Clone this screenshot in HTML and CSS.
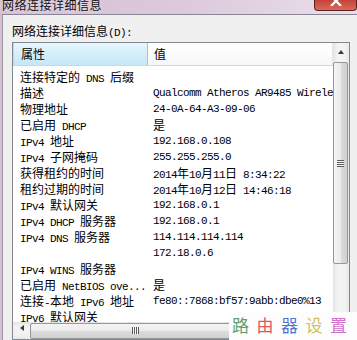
FILE: index.html
```html
<!DOCTYPE html>
<html lang="zh-CN">
<head>
  <meta charset="UTF-8" />
  <title>网络连接详细信息</title>
  <link rel="stylesheet" href="styles.css">
</head>
<body>
  <div class="window">
    <div class="titlebar">
      <span class="title">网络连接详细信息</span>
      <span class="close">
        <svg width="12" height="6" viewBox="0 0 12 6"><path d="M1 -4 L11 6 M11 -4 L1 6" stroke="#fff" stroke-width="2.4"/></svg>
      </span>
    </div>
    <div class="client">
      <div class="label">网络连接详细信息<span class="en">(D):</span></div>
      <div class="list">
        <div class="view">
          <div class="header">
            <div class="hcell hot">属性</div>
            <div class="hcell">值</div>
          </div>
          <div class="rows">
            <div class="row"><div class="k">连接特定的<span class="en"> DNS </span>后缀</div><div class="v"></div></div>
            <div class="row"><div class="k">描述</div><div class="v en">Qualcomm Atheros AR9485 Wireless Network Adapter</div></div>
            <div class="row"><div class="k">物理地址</div><div class="v en">24-0A-64-A3-09-06</div></div>
            <div class="row"><div class="k">已启用<span class="en"> DHCP</span></div><div class="v">是</div></div>
            <div class="row"><div class="k"><span class="en">IPv4 </span>地址</div><div class="v en">192.168.0.108</div></div>
            <div class="row"><div class="k"><span class="en">IPv4 </span>子网掩码</div><div class="v en">255.255.255.0</div></div>
            <div class="row"><div class="k">获得租约的时间</div><div class="v"><span class="en">2014</span>年<span class="en">10</span>月<span class="en">11</span>日<span class="en"> 8:34:22</span></div></div>
            <div class="row"><div class="k">租约过期的时间</div><div class="v"><span class="en">2014</span>年<span class="en">10</span>月<span class="en">12</span>日<span class="en"> 14:46:18</span></div></div>
            <div class="row"><div class="k"><span class="en">IPv4 </span>默认网关</div><div class="v en">192.168.0.1</div></div>
            <div class="row"><div class="k"><span class="en">IPv4 DHCP </span>服务器</div><div class="v en">192.168.0.1</div></div>
            <div class="row"><div class="k"><span class="en">IPv4 DNS </span>服务器</div><div class="v en">114.114.114.114</div></div>
            <div class="row"><div class="k"></div><div class="v en">172.18.0.6</div></div>
            <div class="row"><div class="k"><span class="en">IPv4 WINS </span>服务器</div><div class="v"></div></div>
            <div class="row"><div class="k">已启用<span class="en"> NetBIOS ove...</span></div><div class="v">是</div></div>
            <div class="row"><div class="k">连接<span class="en">-</span>本地<span class="en"> IPv6 </span>地址</div><div class="v en">fe80::7868:bf57:9abb:dbe0%13</div></div>
            <div class="row"><div class="k"><span class="en">IPv6 </span>默认网关</div><div class="v"></div></div>
          </div>
        </div>
        <div class="vscroll">
          <div class="arrow up"></div>
          <div class="vthumb"><span class="grip"></span></div>
        </div>
        <div class="hscroll">
          <div class="arrow left"></div>
          <div class="hthumb"><span class="grip"></span></div>
        </div>
        <div class="corner"></div>
      </div>
    </div>
    <!-- 水印 -->
    <div class="watermark">
      <span class="c1">路</span><span class="c2">由</span><span class="c3">器</span><span class="c4">设</span><span class="c5">置</span>
    </div>
  </div>
</body>
</html>
```

FILE: styles.css
```css
body {
    margin: 0;
    font-family: "Noto Sans CJK SC", sans-serif;
    font-size: 12px;
    color: #000;
    background: #f0f0f0;
}
.window {
    position: relative;
    width: 357px;
    height: 340px;
    overflow: hidden;
    display: flex;
    flex-direction: column;
    background: linear-gradient(to right, #d5c0d3, #dcc9da 50%, #e8dfe8);
}
.titlebar {
    height: 19px;
    display: flex;
    align-items: flex-start;
    padding-left: 2px;
}
.title {
    font-size: 12px;
    letter-spacing: 0.5px;
    line-height: 12px;
    margin-top: -1px;
    color: #111;
    text-shadow: 0 0 4px #f4eef4;
}
.close {
    margin-left: auto;
    width: 41px;
    height: 10px;
    border: 1px solid #5b2020;
    border-top: none;
    border-radius: 0 0 4px 4px;
    background: linear-gradient(#c4433a, #d86a58);
    display: flex;
    justify-content: center;
    align-items: flex-start;
}
.client {
    flex: 1;
    margin-left: 2px;
    border-top: 1px solid #8a8594;
    border-left: 1px solid #9a96a0;
    background: #f0f0f0;
    padding-left: 9px;
}
.label {
    padding-top: 8px;
    line-height: 16px;
    height: 16px;
}
.en {
    font-family: "Liberation Mono", monospace;
    font-size: 11px;
    letter-spacing: -0.6px;
}
.label {
    margin-bottom: 3px;
}
.list {
    width: 338px;
    box-sizing: border-box;
    border: 1px solid #828790;
    background: #fff;
    display: grid;
    grid-template-columns: 320px 16px;
    grid-template-rows: 279px 17px;
}
.view {
    overflow: hidden;
}
.header {
    display: grid;
    grid-template-columns: 135px 1fr;
    height: 22px;
    border-bottom: 1px solid #d5d5d5;
}
.hcell {
    padding-left: 6px;
    line-height: 22px;
    background: linear-gradient(#ffffff, #f6f7f9);
    border-right: 1px solid #e3e5e8;
}
.hcell.hot {
    padding-left: 7px;
    background: linear-gradient(#e6f6fd, #c5e7f8);
    border-left: 1px solid #b7dcef;
    border-right: 1px solid #93c9e3;
    box-sizing: border-box;
}
.rows {
    padding-top: 3px;
}
.row {
    display: grid;
    grid-template-columns: 135px 1fr;
    height: 16px;
    line-height: 16px;
    white-space: nowrap;
}
.k {
    padding-left: 7px;
    overflow: hidden;
}
.v {
    padding-left: 5px;
    overflow: hidden;
}
.vscroll {
    display: flex;
    flex-direction: column;
    background: linear-gradient(to right, #e4e4e4, #f3f3f3 30%, #f3f3f3 70%, #e8e8e8);
}
.arrow {
    display: flex;
    justify-content: center;
    align-items: center;
}
.arrow.up {
    height: 18px;
}
.arrow.up::before {
    content: "";
    border: 3.5px solid transparent;
    border-bottom: 4px solid #3a3a3a;
    border-top: none;
}
.vthumb {
    margin: 1px 1px 0 0;
    height: 200px;
    border: 1px solid #979797;
    border-radius: 2px;
    background: linear-gradient(to right, #f4f4f4, #ebebeb 50%, #dcdcdc 51%, #d0d0d0);
    display: flex;
    justify-content: center;
    align-items: center;
}
.vthumb .grip {
    width: 7px;
    height: 7px;
    background: repeating-linear-gradient(#5b5b5b 0 1px, #f8f8f8 1px 2px);
}
.hscroll {
    display: flex;
    background: linear-gradient(#e4e4e4, #f3f3f3 30%, #f3f3f3 70%, #e8e8e8);
}
.arrow.left {
    width: 17px;
}
.arrow.left::before {
    content: "";
    border: 3.5px solid transparent;
    border-right: 4px solid #3a3a3a;
    border-left: none;
    margin-top: -6px;
}
.hthumb {
    margin-top: 1px;
    width: 208px;
    border: 1px solid #979797;
    border-radius: 2px;
    background: linear-gradient(#f4f4f4, #ebebeb 50%, #dcdcdc 51%, #d0d0d0);
    display: flex;
    justify-content: center;
    padding-top: 3px;
}
.hthumb .grip {
    width: 7px;
    height: 7px;
    background: repeating-linear-gradient(to right, #5b5b5b 0 1px, #f8f8f8 1px 2px);
}
.corner {
    background: #f0f0f0;
}
.watermark {
    position: absolute;
    left: 229px;
    top: 312px;
    width: 128px;
    height: 28px;
    background: #fdfdfd;
    padding-left: 3px;
    box-sizing: border-box;
    font-size: 17px;
    line-height: 26px;
    letter-spacing: 7.5px;
    white-space: nowrap;
}
.c1 { color: #5f9e68; }
.c2 { color: #e6525a; }
.c3 { color: #5272d2; }
.c4 { color: #d2bf62; }
.c5 { color: #d271c9; }
```
